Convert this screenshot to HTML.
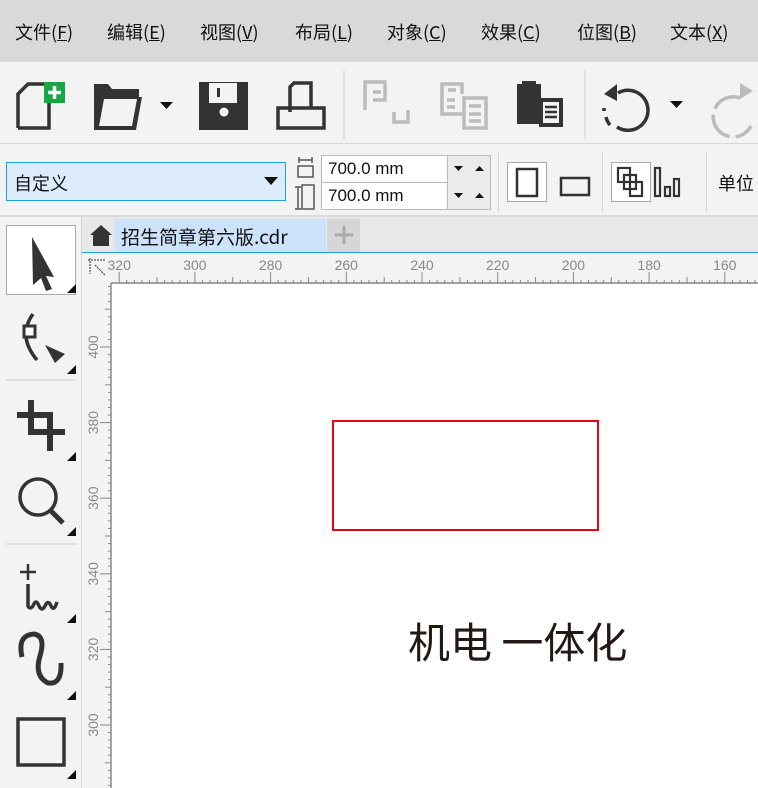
<!DOCTYPE html>
<html><head><meta charset="utf-8"><style>
*{margin:0;padding:0;box-sizing:border-box}
body{width:758px;height:788px;overflow:hidden;background:#f3f3f3;font-family:"Liberation Sans","Noto Sans CJK SC",sans-serif;position:relative}
.abs{position:absolute}
#menu{left:0;top:0;width:758px;height:62px;background:#d9d9d9}
#menu span{position:absolute;top:19px;font-size:18px;color:#111;white-space:nowrap}
.cjk{font-family:"Noto Sans CJK SC","Liberation Sans",sans-serif}
</style></head><body>
<div id="menu" class="abs cjk">
<span style="left:15px">文件(<u>F</u>)</span>
<span style="left:107px">编辑(<u>E</u>)</span>
<span style="left:200px">视图(<u>V</u>)</span>
<span style="left:295px">布局(<u>L</u>)</span>
<span style="left:387px">对象(<u>C</u>)</span>
<span style="left:481px">效果(<u>C</u>)</span>
<span style="left:577px">位图(<u>B</u>)</span>
<span style="left:670px">文本(<u>X</u>)</span>
</div>
<div class="abs" style="left:0;top:62px;width:758px;height:82px;background:#f3f3f3;border-bottom:1px solid #d6d6d6"></div>
<svg class="abs" style="left:0;top:62px" width="758" height="82" fill="none">
<path d="M18 66 V32 L28 22 H44 M49 40 V66 H18" stroke="#333" stroke-width="3.5"/>
<rect x="44" y="20" width="21" height="21" fill="#17a844"/>
<path d="M54.5 24 v13 M48 30.5 h13" stroke="#fff" stroke-width="3.5"/>
<path d="M94 22 h14 l4 5 h27 v8 h3 l-6 33 h-42 z" fill="#333"/>
<path d="M104 37 h33 l-5 27 h-33 z" fill="#f3f3f3"/>
<path d="M160 40 h13 l-6.5 7z" fill="#111"/>
<path d="M199 20 h49 v48 h-49 z" fill="#333"/>
<rect x="209" y="21" width="28" height="20" fill="#f3f3f3"/>
<rect x="217" y="26" width="3" height="9" fill="#333"/>
<circle cx="224" cy="50" r="4.5" fill="#f3f3f3"/>
<path d="M278 66 v-20 h46 v20 z M278 66 h46" stroke="#333" stroke-width="3.5"/>
<path d="M290 50 v-25 l4 -4 h17 v25" stroke="#333" stroke-width="3.5"/>
<line x1="344" y1="8" x2="344" y2="78" stroke="#d0d0d0"/>
<g stroke="#bbb" stroke-width="3.5">
<path d="M365 48 v-28 h20 v18 h-12 M373 30 h8"/><path d="M394 50 v10 h14 v-12 M399 60 h4"/>
<path d="M442 40 v-18 h20 v10 M448 28 h8"/><path d="M464 36 h22 v30 h-22 z M469 44 h12 M469 52 h12 M469 59 h12"/><path d="M442 40 v12 h20 M447 38 h8 M447 45 h8"/>
<path d="M740 36 a20 20 0 1 0 11 28" stroke-dasharray="30 6"/>
</g>
<path d="M740 21 l13 8 -13 8z" fill="#bbb"/>
<g fill="#333"><rect x="517" y="22" width="24" height="40"/><rect x="522" y="19" width="14" height="6"/></g>
<rect x="539" y="36" width="24" height="29" fill="#333"/>
<rect x="543" y="40" width="16" height="21" fill="#f3f3f3"/>
<path d="M545 45 h12 M545 50 h12 M545 55 h12" stroke="#333" stroke-width="2.5"/>
<line x1="585" y1="8" x2="585" y2="78" stroke="#d0d0d0"/>
<path d="M618 31 a20 20 0 1 1 -1 34" stroke="#333" stroke-width="3.5"/>
<path d="M606 55 a18 18 0 0 0 4 8 M604 46 v3" stroke="#333" stroke-width="3.5"/>
<path d="M617 22 l-13 10 13 7z" fill="#333"/>
<path d="M670 39 h13 l-6.5 7z" fill="#111"/>
</svg>
<!-- property bar -->
<div class="abs" style="left:6px;top:162px;width:280px;height:39px;background:#dcecfc;border:1px solid #1ba1e2"></div>
<div class="abs cjk" style="left:14px;top:170px;font-size:18px;color:#111">自定义</div>
<svg class="abs" style="left:264px;top:177px" width="14" height="9"><path d="M0 0h14l-7 8z" fill="#111"/></svg>
<svg class="abs" style="left:294px;top:155px" width="24" height="56" fill="none" stroke="#555" stroke-width="1.5">
<path d="M5 5h13M5 2v6M18 2v6"/><rect x="4" y="11" width="15" height="11"/>
<path d="M4 32v22M1 32h6M1 54h6"/><rect x="8" y="30" width="12" height="24"/>
</svg>
<div class="abs" style="left:321px;top:155px;width:170px;height:55px;background:#fff;border:1px solid #bbb"></div>
<div class="abs" style="left:321px;top:182px;width:170px;height:1px;background:#bbb"></div>
<div class="abs" style="left:447px;top:155px;width:44px;height:55px;background:#ebebeb;border:1px solid #bbb"></div>
<div class="abs" style="left:328px;top:159px;font-size:17px;color:#111">700.0 mm</div>
<div class="abs" style="left:328px;top:186px;font-size:17px;color:#111">700.0 mm</div>
<svg class="abs" style="left:450px;top:160px" width="40" height="50" fill="#111"><path d="M4 6h9l-4.5 5z M25 11h9l-4.5-5z M4 33h9l-4.5 5z M25 38h9l-4.5-5z"/></svg>
<div class="abs" style="left:498px;top:152px;width:1px;height:60px;background:#d6d6d6"></div>
<div class="abs" style="left:507px;top:162px;width:40px;height:40px;background:#fff;border:1px solid #aaa"></div>
<svg class="abs" style="left:507px;top:162px" width="90" height="40" fill="none" stroke="#333" stroke-width="2.5"><rect x="10" y="7" width="20" height="27"/><rect x="54" y="16" width="28" height="17"/></svg>
<div class="abs" style="left:602px;top:152px;width:1px;height:60px;background:#d6d6d6"></div>
<div class="abs" style="left:611px;top:162px;width:40px;height:40px;background:#fff;border:1px solid #aaa"></div>
<svg class="abs" style="left:611px;top:162px" width="90" height="40" fill="none" stroke="#333" stroke-width="2.2"><rect x="7" y="6" width="12" height="14"/><rect x="13" y="13" width="12" height="14"/><rect x="19" y="20" width="12" height="14"/><rect x="44" y="6" width="5" height="28"/><rect x="54" y="25" width="5" height="9"/><rect x="63" y="17" width="5" height="17"/></svg>
<div class="abs" style="left:706px;top:152px;width:1px;height:60px;background:#d6d6d6"></div>
<div class="abs cjk" style="left:718px;top:170px;font-size:18px;color:#111;white-space:nowrap">单位</div>
<div class="abs" style="left:0;top:215px;width:758px;height:2px;background:#dadada"></div>
<!-- left toolbox -->
<div class="abs" style="left:81px;top:217px;width:1px;height:571px;background:#d6d6d6"></div>
<div class="abs" style="left:6px;top:225px;width:70px;height:70px;background:#fff;border:1px solid #aaa"></div>
<svg class="abs" style="left:0;top:217px" width="82" height="571">
<path d="M32 20 L54 60 L46 59 L52 72 L46 74 L41 61 L33 68 Z" fill="#333"/>
<path d="M33 97 q-16 22 4 46" stroke="#333" stroke-width="3.5" fill="none"/>
<rect x="24" y="109" width="11" height="11" fill="#fff" stroke="#333" stroke-width="3"/>
<path d="M45 128 l20 9 -10 9z" fill="#333"/>
<line x1="6" y1="163" x2="76" y2="163" stroke="#ccc"/>
<path d="M31 183 V218 M17 198 H50 V234 M31 215 H65" stroke="#333" stroke-width="6" fill="none"/>
<circle cx="38" cy="280" r="18" fill="none" stroke="#333" stroke-width="3.5"/>
<path d="M50 293 l13 13" stroke="#333" stroke-width="5"/>
<line x1="6" y1="327" x2="76" y2="327" stroke="#ccc"/>
<path d="M28 347 v16 M20 355 h16" stroke="#333" stroke-width="2.5"/>
<path d="M28 367 v22 q2 4 5 0 q3 -8 6 0 q3 6 6 0 q3 -7 6 0 q3 6 6 -4" stroke="#333" stroke-width="3.5" fill="none"/>
<path d="M22 440 q-5 -22 12 -23 q12 2 6 22 q-6 20 8 27 q14 2 13 -20" stroke="#333" stroke-width="5" fill="none"/>
<rect x="18" y="502" width="46" height="46" fill="none" stroke="#333" stroke-width="3.5"/>
<g fill="#111"><path d="M76 67v9h-9z M76 148v9h-9z M76 235v9h-9z M76 310v9h-9z M76 397v9h-9z M76 474v9h-9z M76 553v9h-9z"/></g>
</svg>
<!-- tabs -->
<div class="abs" style="left:82px;top:217px;width:676px;height:35px;background:#e8e8e8"></div>
<div class="abs" style="left:115px;top:219px;width:211px;height:33px;background:#cce2fa"></div>
<div class="abs" style="left:327px;top:219px;width:33px;height:33px;background:#d6d6d6"></div>
<svg class="abs" style="left:88px;top:222px" width="270" height="28">
<path d="M2 13 L13 3 L24 13 H21 V24 H5 V13Z" fill="#333"/>
<path d="M256 4v18M247 13h18" stroke="#aaa" stroke-width="3"/>
</svg>
<div class="abs cjk" style="left:121px;top:223px;font-size:19px;color:#111;white-space:nowrap">招生简章第六版.cdr</div>
<div class="abs" style="left:82px;top:252px;width:676px;height:1px;background:#1ba1e2"></div>
<!-- rulers -->
<div class="abs" style="left:111px;top:284px;width:647px;height:504px;background:#fff"></div>
<svg class="abs" style="left:0;top:0" width="758" height="788" id="r"></svg>
<div class="abs cjk" style="left:408px;top:620px;font-size:42px;line-height:1;color:#231815;white-space:nowrap">机电 一体化</div>
<div class="abs" style="left:332px;top:420px;width:267px;height:111px;border:2px solid #e30613"></div>
<script>
var s='';
function X(v){return 422+(240-v)*3.785}
function Y(v){return 347+(400-v)*3.78}
s+='<line x1="111" y1="283" x2="758" y2="283" stroke="#888" stroke-width="1.5"/>';
s+='<line x1="111" y1="283" x2="111" y2="788" stroke="#888" stroke-width="1.5"/>';
for(var v=330;v>=150;v-=2){var x=X(v);if(x<113||x>758)continue;var m=v%20==0,h=v%10==0;
s+='<line x1="'+x+'" y1="'+(m?272:(h?277:280))+'" x2="'+x+'" y2="283" stroke="#888"/>';
if(m)s+='<text x="'+x+'" y="270" text-anchor="middle" font-size="14" fill="#888" font-family="Liberation Sans,sans-serif">'+v+'</text>';}
for(var v=420;v>=280;v-=2){var y=Y(v);if(y<286||y>788)continue;var m=v%20==0,h=v%10==0;
s+='<line y1="'+y+'" x1="'+(m?100:(h?105:108))+'" y2="'+y+'" x2="111" stroke="#888"/>';
if(m)s+='<text x="0" y="0" transform="translate(98 '+y+') rotate(-90)" text-anchor="middle" font-size="14" fill="#888" font-family="Liberation Sans,sans-serif">'+v+'</text>';}
s+='<path d="M88 260h18M90 258v16M95 265l10 10" stroke="#333" stroke-dasharray="2 1" fill="none"/>';
document.getElementById('r').innerHTML=s;
</script>
</body></html>
